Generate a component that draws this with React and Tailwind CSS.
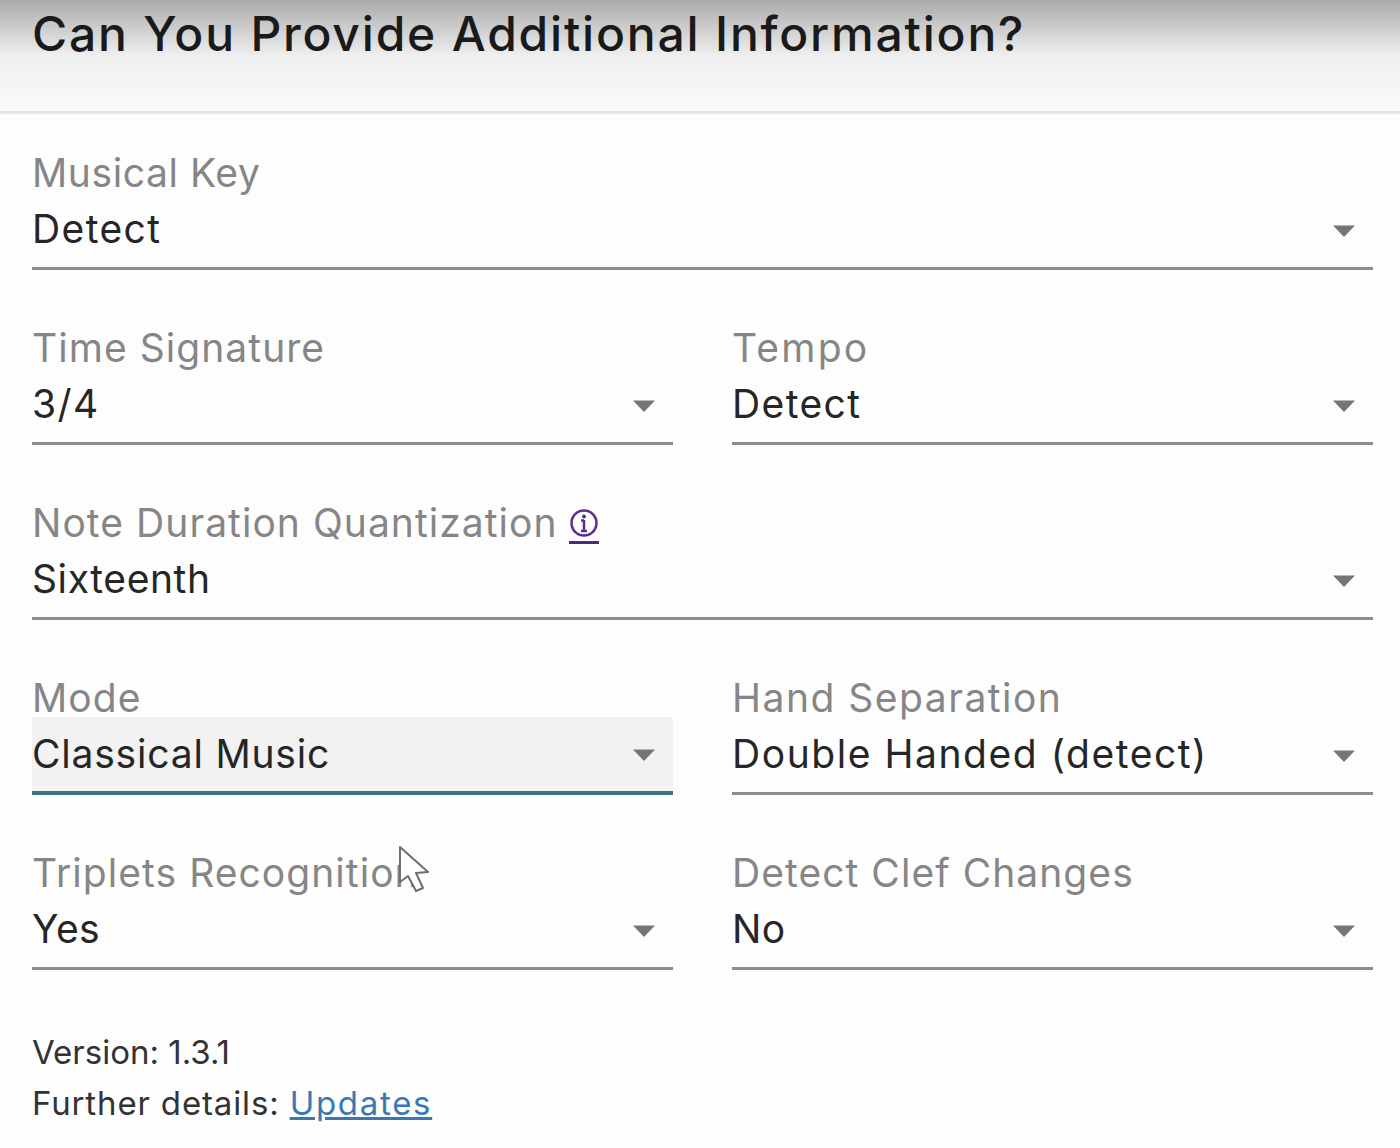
function Caret() {
  return (
    <svg width="24" height="14" viewBox="0 0 24 14" className="shrink-0 mt-[2px]">
      <path d="M1 1.500h22L12 13z" fill="#757575" />
    </svg>
  );
}

// circled "i" with the link underline below it
function InfoLink() {
  return (
    <a href="#" className="-mb-[2px] -ml-[3px] border-b-[3px] border-[#4b2a7f] pb-[3px] text-[#5b2d8c]">
      <svg width="30" height="30" viewBox="0 0 30 30" fill="none" className="block">
        <circle cx="15" cy="15" r="12.500" stroke="currentColor" strokeWidth="2.500" />
        <circle cx="15" cy="8.500" r="2" fill="currentColor" />
        <path d="M15 12v11M12 12.500h3M12 23h6" stroke="currentColor" strokeWidth="2.500" />
      </svg>
    </a>
  );
}

function SelectField({ label, value, focused, labelClass = 'tracking-[1.05px]', valueClass = 'tracking-[1.4px]', children }) {
  return (
    <div className="h-[175px]">
      <div className={`h-[60px] flex items-end gap-[14px] text-[39px] leading-[38px] text-[#868686] ${labelClass}`}>
        <span>{label}</span>
        {children}
      </div>
      <div className={`h-[78px] flex items-center justify-between pr-[17px] ${focused ? 'bg-[#f2f2f2] border-b-[4px] border-[#3a7482]' : 'border-b-[3px] border-[#8c8c8c]'}`}>
        <span className={`text-[39px] text-[#262626] ${valueClass}`}>{value}</span>
        <Caret />
      </div>
    </div>
  );
}

export default function App() {
  return (
    <div className="relative h-[1148px] w-[1400px] overflow-hidden bg-[#fdfdfd] font-['Inter','Liberation_Sans',sans-serif]">
      {/* Header */}
      <div className="h-[114px] px-8 bg-gradient-to-b from-[#ababab] via-[#efefef] via-50% to-[#fbfbfb] border-b-[3px] border-[#e6e6e6]">
        <h1 className="text-[48px] leading-[68px] font-medium text-[#1a1a1a] tracking-[1.8px] whitespace-nowrap">
          Can You Provide Additional Information?
        </h1>
      </div>

      <div className="pl-8 pr-[27px] pt-[18px]">
        <SelectField label="Musical Key" value="Detect" labelClass="tracking-[0.6px]" />
        <div className="grid grid-cols-2 gap-x-[59px]">
          <SelectField label="Time Signature" value="3/4" />
          <SelectField label="Tempo" value="Detect" labelClass="tracking-[2.2px]" />
        </div>
        <SelectField label="Note Duration Quantization" value="Sixteenth" valueClass="tracking-[0.6px]">
          <InfoLink />
        </SelectField>
        <div className="grid grid-cols-2 gap-x-[59px]">
          <SelectField label="Mode" value="Classical Music" valueClass="tracking-[0.8px]" focused />
          <SelectField label="Hand Separation" value="Double Handed (detect)" labelClass="tracking-[1.5px]" valueClass="tracking-[1.55px]" />
          <SelectField label="Triplets Recognition" value="Yes" valueClass="tracking-[0.4px]" />
          <SelectField label="Detect Clef Changes" value="No" valueClass="tracking-[0.4px]" />
        </div>

        <div className="pt-[20px] text-[33px] leading-[51px] text-[#333333]">
          <p>Version: 1.3.1</p>
          <p className="tracking-[0.85px]">
            Further details: <a href="#" className="text-[#3a78b5] underline tracking-[1.7px]">Updates</a>
          </p>
        </div>
      </div>

      {/* Mouse pointer */}
      <svg width="34" height="50" viewBox="0 0 34 50" className="absolute left-[398px] top-[845px]">
        <path d="M2 2v35l8-6 8 15 7-3-7-15 12-1z" fill="#ffffff" stroke="#6e6e6e" strokeWidth="2" strokeLinejoin="round" />
      </svg>
    </div>
  );
}
